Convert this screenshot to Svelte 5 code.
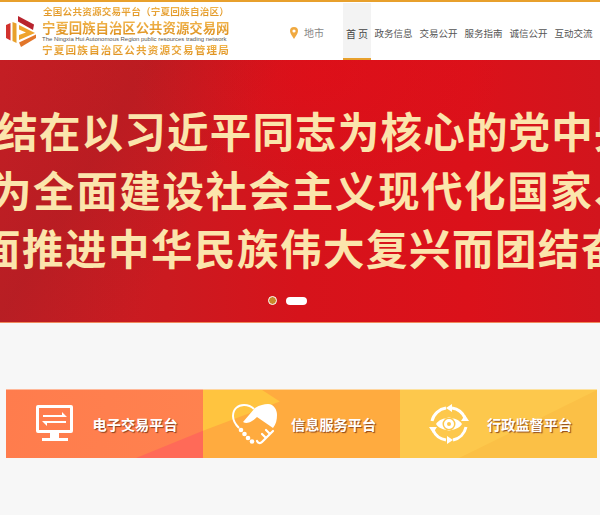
<script>
  const nav = ['政务信息', '交易公开', '服务指南', '诚信公开', '互动交流'];
  const lines = [
    { text: '团结在以习近平同志为核心的党中央周围', cls: 'l1' },
    { text: '为全面建设社会主义现代化国家、全', cls: 'l2' },
    { text: '面推进中华民族伟大复兴而团结奋斗', cls: 'l3' }
  ];
</script>

<div class="page">
  <header class="header">
    <div class="brand">
      <svg class="logo" viewBox="0 0 30 32" width="30" height="32">
        <path d="M0 9 L4.5 7 V24.5 L0 22 Z" fill="#d2322d" />
        <path d="M6.5 6 L10.5 7.5 V27 L6.5 25 Z" fill="#e8a02c" />
        <path d="M12 0 L28 8.5 L27 14 L12 5.5 Z" fill="#b8242e" />
        <path d="M13 9 L29 17 L13 24 V19 L20 16.4 L13 13.5 Z" fill="#efa32b" />
        <path d="M13 26.5 L30 18.5 L30 22 L15 31 Z" fill="#e2762a" />
      </svg>
      <div class="titles">
        <div class="t1">全国公共资源交易平台（宁夏回族自治区）</div>
        <div class="t2">宁夏回族自治区公共资源交易网</div>
        <div class="t3">The Ningxia Hui Autonomous Region public resources trading network</div>
        <div class="t4">宁夏回族自治区公共资源交易管理局</div>
      </div>
    </div>
    <div class="loc">
      <svg viewBox="0 0 8 12" width="8" height="12">
        <path d="M4 0 A4 4 0 0 1 8 4 C8 6.5 5.5 9.5 4 12 C2.5 9.5 0 6.5 0 4 A4 4 0 0 1 4 0 Z M4 2.4 A1.6 1.6 0 1 0 4 5.6 A1.6 1.6 0 1 0 4 2.4 Z" fill="#f0a940" fill-rule="evenodd" />
      </svg>
      <span>地市</span>
    </div>
    <nav class="nav">
      <a class="home">首 页</a>
      {#each nav as item}
        <a>{item}</a>
      {/each}
    </nav>
  </header>

  <section class="banner">
    {#each lines as line}
      <div class="line {line.cls}">{line.text}</div>
    {/each}
    <div class="dots"><i class="dot"></i><i class="pill"></i></div>
  </section>

  <section class="tiles">
    <div class="tile a">
      <svg class="ic" viewBox="0 0 38 38" width="38" height="38">
        <path fill="#fff" fill-rule="evenodd" d="M2 0 H35 A2 2 0 0 1 37 2 V26 A2 2 0 0 1 35 28 H23 V33 H32 V36 H6 V33 H14 V28 H2 A2 2 0 0 1 0 26 V2 A2 2 0 0 1 2 0 Z M3 3 V25 H34 V3 Z" />
        <path fill="#fff" d="M7 10 H26 V7 L31 12 H7 Z M6 16 H30 V18 H11 V21 Z" />
      </svg>
      <span>电子交易平台</span>
    </div>
    <div class="tile b">
      <svg class="ic" viewBox="0 0 46 42" width="46" height="42">
        <path fill="none" stroke="#fff" stroke-width="2" d="M7 25 C3 21 1 17 1 13 C1 6 6 2 12 2 C16 2 19 3 22 6" />
        <path fill="#fff" d="M11 19 L23 5 C28 2 32 1 36 1 C42 1 45 7 45 12 C45 17 44 21 41 25 L25 14 C22 17 16 22 11 19 Z" />
        <path fill="none" stroke="#fff" stroke-width="2.2" stroke-linecap="round" d="M41 28 L38 31 L34 27 M38 31 L34 35 L30 31 M34 35 L30 39 C28 41 26 40 25 38" />
        <g fill="#fff"><circle cx="9" cy="27" r="2.3"/><circle cx="12.5" cy="31" r="2.3"/><circle cx="16" cy="35" r="2.3"/><circle cx="20" cy="38.5" r="2.3"/></g>
      </svg>
      <span>信息服务平台</span>
    </div>
    <div class="tile c">
      <svg class="ic" viewBox="0 0 40 40" width="40" height="40">
        <g fill="none" stroke="#fff" stroke-width="3">
          <path d="M3 17 A17 17 0 0 1 17 4" />
          <path d="M23 4 A17 17 0 0 1 36 14" />
          <path d="M37 23 A17 17 0 0 1 24 36" />
          <path d="M17 36 A17 17 0 0 1 4 26" />
        </g>
        <g fill="#fff">
          <path d="M23 0 L23 8 L17 4 Z" />
          <path d="M40 17 L32 17 L36 11 Z" />
          <path d="M18 40 L18 32 L24 36 Z" />
          <path d="M0 23 L8 23 L4 29 Z" />
          <path fill-rule="evenodd" d="M7 20 C12 12 28 12 33 20 C28 28 12 28 7 20 Z M20 13.5 A6.5 6.5 0 1 0 20 26.5 A6.5 6.5 0 1 0 20 13.5 Z" />
          <path fill-rule="evenodd" d="M20 15 A5 5 0 1 1 20 25 A5 5 0 1 1 20 15 Z M20 18 A2 2 0 1 0 20 22 A2 2 0 1 0 20 18 Z" />
        </g>
      </svg>
      <span>行政监督平台</span>
    </div>
  </section>
</div>

<style>
  :global(body) {
    margin: 0;
    background: #f7f7f7;
    font-family: "Noto Sans CJK SC", "Liberation Sans", sans-serif;
  }
  .page {
    width: 600px;
    height: 515px;
    overflow: hidden;
  }
  .header {
    height: 58px;
    background: #fff;
    border-top: 2px solid #e8a02c;
    display: flex;
    align-items: stretch;
  }
  .brand {
    display: flex;
    align-items: center;
    padding-left: 6px;
    width: 274px;
    box-sizing: border-box;
  }
  .logo {
    flex: none;
    margin-right: 6px;
    margin-top: 2px;
  }
  .titles {
    width: 188px;
    display: flex;
    flex-direction: column;
    white-space: nowrap;
    margin-top: -3px;
  }
  .titles div {
    background: linear-gradient(#f5bd58, #dd8f1c);
    background-clip: text;
    -webkit-background-clip: text;
    color: transparent;
    font-weight: 700;
  }
  .t1 {
    font-size: 9.6px;
    line-height: 14px;
    letter-spacing: 0.2px;
    margin-left: 1px;
  }
  .t2 {
    font-size: 13.4px;
    line-height: 18px;
  }
  .t3 {
    font-family: "Liberation Sans", sans-serif;
    font-size: 5.95px;
    line-height: 7px;
    background: none !important;
    color: #555 !important;
    font-weight: 400 !important;
  }
  .t4 {
    font-size: 10.6px;
    line-height: 13px;
    letter-spacing: 1.15px;
  }
  .loc {
    width: 69px;
    display: flex;
    align-items: center;
    gap: 6px;
    padding-left: 16px;
    box-sizing: border-box;
    font-size: 10px;
    color: #888;
    padding-top: 3px;
  }
  .nav {
    display: flex;
    align-items: stretch;
    font-size: 9.5px;
    color: #555;
  }
  .nav a {
    width: 45px;
    display: flex;
    align-items: center;
    justify-content: center;
    padding-top: 3px;
    box-sizing: border-box;
    white-space: nowrap;
  }
  .nav a.home {
    width: 28px;
    background: #f3f3f3;
    border-bottom: 2px solid #e8a02c;
    font-size: 10px;
    padding-top: 5px;
    color: #444;
    margin-top: 1px;
  }
  .banner {
    position: relative;
    height: 263px;
    box-sizing: border-box;
    overflow: hidden;
    padding-top: 41px;
    border-bottom: 1px solid #f08a5c;
    background:
      radial-gradient(ellipse 190px 110px at 320px 15px, rgba(232, 10, 22, 0.35), rgba(232, 10, 22, 0)),
      linear-gradient(120deg, rgba(160, 30, 35, 0) 0%, rgba(160, 30, 35, 0.35) 20%, rgba(160, 30, 35, 0) 38%),
      linear-gradient(90deg, #c41e24 0%, #cb1a20 28%, #d6131b 50%, #db111a 78%, #d2151d 100%);
  }
  .line {
    height: 58.5px;
    line-height: 58.5px;
    font-size: 41.5px;
    letter-spacing: 1.5px;
    font-weight: 700;
    color: #fbe5ac;
    white-space: nowrap;
  }
  .l1 { margin-left: -46.5px; letter-spacing: 1.2px; }
  .l2 { margin-left: -10px; letter-spacing: 1.6px; }
  .l3 { margin-left: -21px; }
  .dots {
    position: absolute;
    left: 268px;
    top: 236px;
    display: flex;
    align-items: center;
    gap: 9px;
  }
  .dot {
    width: 7px;
    height: 7px;
    border-radius: 50%;
    background: #c8862a;
    border: 1px solid #fff;
  }
  .pill {
    width: 21px;
    height: 8px;
    border-radius: 4px;
    background: #fff;
  }
  .tiles {
    display: flex;
    margin: 66px 0 0 6px;
  }
  .tile {
    position: relative;
    overflow: hidden;
    width: 197px;
    height: 69px;
    box-sizing: border-box;
    display: flex;
    align-items: center;
    padding-bottom: 1px;
    font-size: 14.2px;
    font-weight: 700;
    color: #fff;
    text-shadow: 1px 1px 1px rgba(120, 50, 20, 0.85);
  }
  .tile::before {
    content: "";
    position: absolute;
    inset: 0;
  }
  .tile > * {
    position: relative;
  }
  .ic {
    flex: none;
  }
  .a {
    background: linear-gradient(100deg, #ff7c4d, #ff824f);
    padding-left: 30px;
    border-top: 1px solid #ffb89a;
  }
  .a::before {
    background: #ff6a58;
    clip-path: polygon(66% 100%, 100% 60%, 100% 100%);
  }
  .a .ic { margin-right: 18.5px; }
  .b {
    background: #ffab3f;
    padding-left: 29px;
    border-top: 1px solid #ffd6a0;
  }
  .b::before {
    background: #ffc43f;
    clip-path: polygon(0 0, 30% 0, 39% 17%, 0 60%);
  }
  .b .ic { margin-right: 13px; }
  .c {
    background: #fdc84c;
    padding-left: 29px;
    border-top: 1px solid #fde2a0;
  }
  .c::before {
    background: #fbc046;
    clip-path: polygon(100% 0, 100% 100%, 30% 100%);
  }
  .c .ic { margin-right: 18px; }
</style>
